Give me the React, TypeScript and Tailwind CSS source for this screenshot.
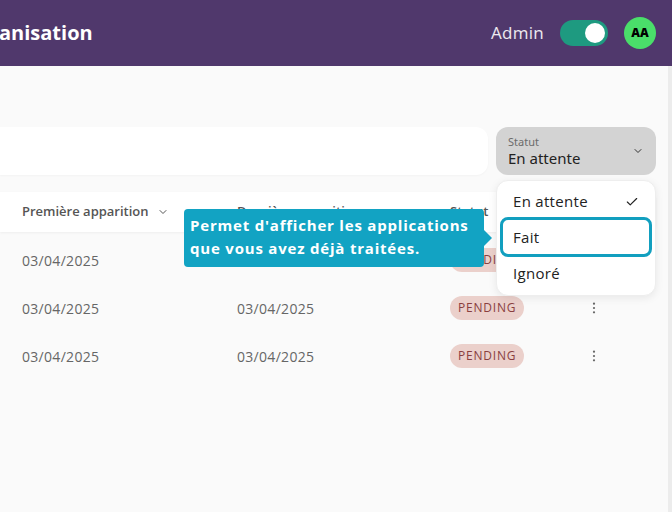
import React from 'react';

const rows = [1, 2, 3];

function Chevron({ className }: { className?: string }) {
  return (
    <svg viewBox="0 0 24 24" className={className} fill="none" stroke="currentColor" strokeWidth={2} strokeLinecap="round" strokeLinejoin="round">
      <path d="M6 9l6 6 6-6" />
    </svg>
  );
}

export default function App() {
  return (
    <div className="w-[672px] h-[512px] overflow-hidden bg-[#fafafa] font-['Open_Sans',sans-serif] relative">
      {/* Top bar */}
      <div className="h-[66px] bg-[#50386c] flex items-center justify-between pr-4">
        <div className="text-white text-[20px] font-bold -ml-[1px]">anisation</div>
        <div className="flex items-center">
          <span className="text-white/90 text-[17px] tracking-[0.3px] mr-4">Admin</span>
          <div className="w-[48px] h-[26px] rounded-full bg-[#1e9a80] flex items-center justify-end pr-[3px] mr-4">
            <div className="w-[20px] h-[20px] rounded-full bg-white" />
          </div>
          <div className="w-[32px] h-[32px] rounded-full bg-[#4ade6a] flex items-center justify-center text-[12px] font-extrabold text-black">AA</div>
        </div>
      </div>

      {/* Filters */}
      <div className="flex gap-2 pr-4 mt-[61px]">
        <div className="flex-1 h-[48px] bg-white rounded-r-xl shadow-[0_1px_2px_rgba(0,0,0,0.03)]" />
        <div className="relative w-[160px]">
          <div className="h-[48px] rounded-xl bg-[#d3d3d3] flex items-center justify-between px-3 font-['Noto_Sans',sans-serif]">
            <div className="flex flex-col leading-tight">
              <span className="text-[11px] text-[#6b6b6b]">Statut</span>
              <span className="text-[15px] text-[#222]">En attente</span>
            </div>
            <Chevron className="w-[12px] h-[12px] text-[#333]" />
          </div>
          {/* Dropdown */}
          <div className="absolute z-20 left-0 top-[53px] w-[160px] bg-white rounded-xl shadow-[0_2px_8px_rgba(0,0,0,0.08)] border border-[#eee] pt-[5px] pb-[5px] px-[3px] flex flex-col text-[15px] tracking-[0.3px] text-[#222]">
            <div className="h-[31px] flex items-center justify-between px-[13px]">
              <span>En attente</span>
              <svg viewBox="0 0 24 24" className="w-[14px] h-[14px]" fill="none" stroke="#222" strokeWidth={2} strokeLinecap="round" strokeLinejoin="round">
                <path d="M4 12l5 5 11-11" />
              </svg>
            </div>
            <div className="h-[40px] flex items-center px-[10px] border-[3px] border-[#129fbf] rounded-lg">Fait</div>
            <div className="h-[33px] flex items-center px-[13px]">Ignoré</div>
          </div>
        </div>
      </div>

      {/* Table */}
      <div className="mt-[17px] pr-4">
        <div className="h-[40px] bg-white rounded-r-lg shadow-[0_1px_3px_rgba(0,0,0,0.05)] grid grid-cols-[237px_213px_110px_1fr] items-center text-[13px] font-semibold text-[#555]">
          <div className="pl-[22px] flex items-center gap-2">
            Première apparition <Chevron className="w-[12px] h-[12px]" />
          </div>
          <div className="flex items-center gap-2">
            Dernière apparition <Chevron className="w-[12px] h-[12px]" />
          </div>
          <div>Statut</div>
          <div />
        </div>
        <div className="mt-[4px]">
          {rows.map((r) => (
            <div key={r} className="h-[48px] grid grid-cols-[237px_213px_110px_1fr] items-center text-[14px] tracking-[0.3px] text-[#666]">
              <div className="pl-[22px]">03/04/2025</div>
              <div>03/04/2025</div>
              <div>
                <span className="inline-flex items-center h-[24px] px-[8px] rounded-full bg-[#ebd0cb] text-[#8a3f3f] text-[12px] tracking-[0.8px]">PENDING</span>
              </div>
              <div className="pl-[32px] text-[#666]">
                <svg viewBox="0 0 4 14" className="w-[4px] h-[12px]" fill="currentColor">
                  <circle cx="2" cy="2" r="1.3" />
                  <circle cx="2" cy="7" r="1.3" />
                  <circle cx="2" cy="12" r="1.3" />
                </svg>
              </div>
            </div>
          ))}
        </div>
      </div>

      {/* Tooltip */}
      <div className="absolute z-30 left-[184px] top-[209px] w-[300px] h-[58px] bg-[#12a3c3] rounded-[4px] px-[6px] py-[5px] text-white font-bold text-[15px] tracking-[0.8px] leading-[23px] whitespace-nowrap">
        Permet d'afficher les applications
        <br />
        que vous avez déjà traitées.
        <div className="absolute right-[-8px] top-[21px] w-0 h-0 border-y-[8px] border-y-transparent border-l-[8px] border-l-[#12a3c3]" />
      </div>

      <div className="absolute right-0 top-[66px] bottom-0 w-[4px] bg-[#ececec]" />
    </div>
  );
}
